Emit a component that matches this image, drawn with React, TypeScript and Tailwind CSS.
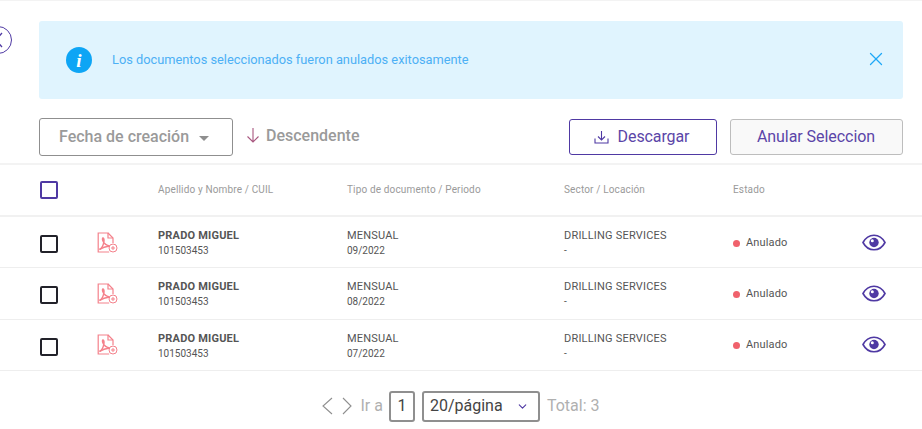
import { ChevronDown, X } from 'lucide-react';

const rows = [
    { period: '09/2022' },
    { period: '08/2022' },
    { period: '07/2022' },
];

const PdfIcon = () => (
    <svg width="21" height="22" viewBox="0 0 21 22" fill="none" stroke="#f4818b" strokeWidth="1.2" className="mb-[1px]">
        <path d="M11.500 1H1.200v19h11" />
        <path d="M11 1l5 5v5" />
        <path d="M11 1v5h5" />
        <path d="M2.500 17.500c2-1 4-4.500 4.500-8.500 0-2-.5-3-1-3s-.8 1 0 3c1 2.500 3 4.500 7 5" strokeWidth="1.500" />
        <path d="M2.500 17.500c3-2 6-3 10-3.500" strokeWidth="1.500" />
        <circle cx="16" cy="16" r="4" strokeWidth="1" fill="#fff" />
        <path d="M14 16h4M16 14v4" strokeWidth="1" />
    </svg>
);

const EyeIcon = () => (
    <svg width="24" height="17" viewBox="0 0 24 17" fill="none" className="mb-[2px]">
        <path d="M1 8.500C3.500 3.800 7.500 1.200 12 1.200s8.500 2.600 11 7.300c-2.500 4.700-6.500 7.300-11 7.300S3.500 13.200 1 8.500z" stroke="#4f39a3" strokeWidth="1.600" />
        <circle cx="12" cy="8.500" r="4.700" fill="#4f39a3" />
        <circle cx="10.300" cy="6.800" r="1.500" fill="#fff" />
    </svg>
);

const App = () => {
    return (
        <div className="relative w-[922px] h-[429px] overflow-hidden bg-white font-['Roboto',sans-serif] border-t border-[#f3f3f3]">
            {/* back button, cut off by the page edge */}
            <div className="absolute left-[-16px] top-[25px] w-[28px] h-[28px] rounded-full border border-[#4f39a3]">
                <svg width="8" height="16" viewBox="0 0 8 16" fill="none" stroke="#4f39a3" strokeWidth="1.300" className="absolute left-[10px] top-[5px]">
                    <path d="M7 1L1 8l6 7" />
                </svg>
            </div>

            <div className="pl-[39px] pr-[19px] pt-[20px]">
                <div className="h-[78px] rounded-[3px] bg-[#e0f4fe] flex items-center pl-[27px] pr-[16px]">
                    <div className="w-[26px] h-[26px] rounded-full bg-[#0ea5f5] flex items-center justify-center text-white font-['Liberation_Serif',serif] italic font-bold text-[19px] leading-none">
                        i
                    </div>
                    <span className="ml-[20px] text-[12.800px] text-[#4db0f5]">
                        Los documentos seleccionados fueron anulados exitosamente
                    </span>
                    <X size={22} strokeWidth={1.400} className="ml-auto mb-[3px] text-[#1ea7f7]" />
                </div>

                <div className="mt-[19px] flex items-start">
                    <div className="w-[194px] h-[38px] rounded-[3px] border border-[#8f8f8f] flex items-center pl-[19px] text-[16px] font-medium text-[#9a9a9a]">
                        Fecha de creación
                        <span className="ml-[10px] mt-[2px] w-0 h-0 border-x-[5px] border-x-transparent border-t-[5px] border-t-[#8f8f8f]" />
                    </div>
                    <div className="ml-[13px] mt-[6px] flex items-center text-[16px] font-medium text-[#9a9a9a]">
                        <svg width="14" height="18" viewBox="0 0 14 18" fill="none" stroke="#a8577f" strokeWidth="1.100">
                            <path d="M7 1v14M1.500 9.500L7 15l5.500-5.500" />
                        </svg>
                        <span className="ml-[6px]">Descendente</span>
                    </div>
                    <button className="ml-auto w-[148px] h-[36px] mt-[1px] rounded-[3px] border border-[#4f39a3] flex items-center justify-center pr-[3px] text-[16px] tracking-[-0.100px] text-[#5b45a8]">
                        <svg width="15" height="14" viewBox="0 0 15 14" fill="none" stroke="#4f39a3" strokeWidth="1.100" className="mr-[9px]">
                            <path d="M7.500 1v8.500M4 6.500l3.500 3.500L11 6.500" />
                            <path d="M1 8.500V13h13V8.500" />
                        </svg>
                        Descargar
                    </button>
                    <button className="ml-[13px] w-[173px] h-[36px] mt-[1px] rounded-[3px] border border-[#bdbdbd] bg-[#f9f9f9] pr-[1px] text-[16px] tracking-[-0.050px] text-[#5b45a8]">
                        Anular Seleccion
                    </button>
                </div>
            </div>

            <div className="mt-[7px] border-t-2 border-[#f3f3f3]">
                <div className="grid grid-cols-[57px_61px_189px_217px_169px_129px_1fr] items-center h-[52px] pl-[40px] border-b-2 border-[#f1f1f1] text-[10px] tracking-[0.150px] text-[#9a9a9a]">
                    <div className="w-[18px] h-[18px] rounded-[2px] border-2 border-[#4f39a3]" />
                    <div />
                    <div className="mb-[2px]">Apellido y Nombre / CUIL</div>
                    <div className="mb-[2px]">Tipo de documento / Periodo</div>
                    <div className="mb-[2px]">Sector / Locación</div>
                    <div className="mb-[2px]">Estado</div>
                    <div />
                </div>

                {rows.map((row) => (
                    <div
                        key={row.period}
                        className="grid grid-cols-[57px_61px_189px_217px_169px_129px_1fr] items-center h-[51.300px] pt-[2px] pl-[40px] border-b border-[#eeeeee] text-[#555555]"
                    >
                        <div className="mt-[2px] w-[18px] h-[18px] rounded-[2px] border-2 border-[#22222a]" />
                        <PdfIcon />
                        <div>
                            <div className="text-[11px] leading-[14px] font-bold tracking-[0.200px] text-[#555555]">PRADO MIGUEL</div>
                            <div className="mt-[1px] text-[10px] leading-[13px] text-[#555555]">101503453</div>
                        </div>
                        <div>
                            <div className="text-[11px] leading-[14px] tracking-[0.200px]">MENSUAL</div>
                            <div className="mt-[1px] text-[10px] leading-[13px]">{row.period}</div>
                        </div>
                        <div>
                            <div className="text-[11px] leading-[14px] tracking-[0.200px]">DRILLING SERVICES</div>
                            <div className="mt-[1px] text-[10px] leading-[13px]">-</div>
                        </div>
                        <div className="flex items-center text-[11px] tracking-[0.150px]">
                            <span className="w-[7px] h-[7px] rounded-full bg-[#f0626c] mr-[6px]" />
                            Anulado
                        </div>
                        <EyeIcon />
                    </div>
                ))}

                <div className="mt-[20px] flex items-center justify-center text-[16px] text-[#b0b0b0]">
                    <svg width="11" height="18" viewBox="0 0 11 18" fill="none" stroke="#8f8f8f" strokeWidth="1.100" className="mr-[9px]">
                        <path d="M10 1L1 9l9 8" />
                    </svg>
                    <svg width="10" height="18" viewBox="0 0 10 18" fill="none" stroke="#8f8f8f" strokeWidth="1.100">
                        <path d="M1 1l8 8-8 8" />
                    </svg>
                    <span className="ml-[8px]">Ir a</span>
                    <div className="ml-[6px] w-[26px] h-[31px] rounded-[3px] border-2 border-[#8f8f8f] flex items-center justify-center text-[#444444]">
                        1
                    </div>
                    <div className="ml-[7px] w-[118px] h-[31px] rounded-[3px] border-2 border-[#8f8f8f] flex items-center pl-[6px] text-[#444444]">
                        20/página
                        <ChevronDown size={13} strokeWidth={2} className="ml-auto mr-[9px] text-[#4f39a3]" />
                    </div>
                    <span className="ml-[7px]">Total: 3</span>
                </div>
            </div>
        </div>
    );
};

export default App;
